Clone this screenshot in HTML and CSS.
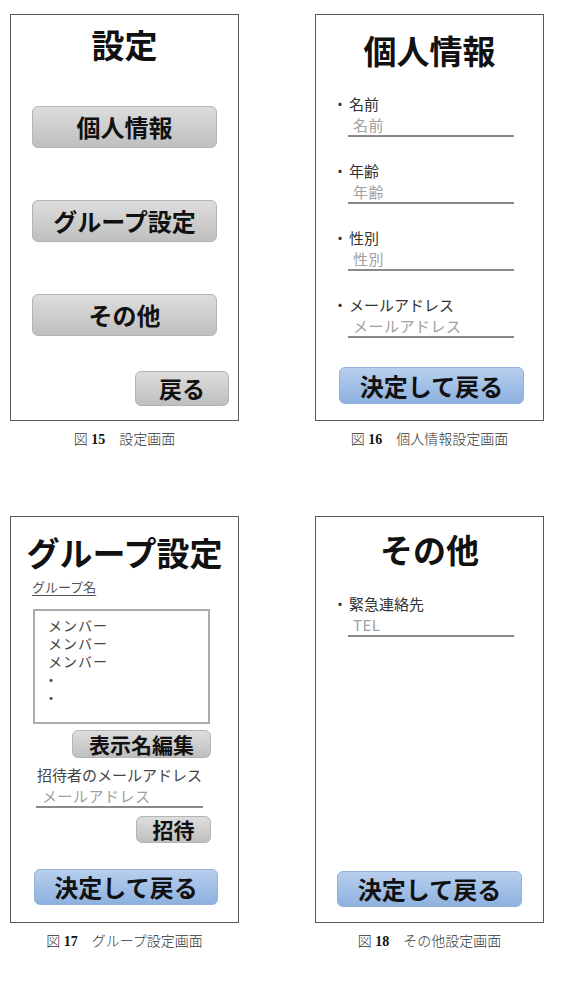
FILE: index.html
```html
<!DOCTYPE html>
<html lang="ja">
<head>
    <meta charset="UTF-8">
    <meta name="viewport" content="width=device-width, initial-scale=1.0">
    <title>設定画面</title>
    <link rel="stylesheet" href="styles.css">
</head>
<body>
    <div class="sheet">
        <!-- 設定 -->
        <div class="figure">
            <div class="screen settings">
                <div class="screen-title">設定</div>
                <button class="btn btn-gray menu-btn first">個人情報</button>
                <button class="btn btn-gray menu-btn">グループ設定</button>
                <button class="btn btn-gray menu-btn">その他</button>
                <button class="btn btn-gray back-btn">戻る</button>
            </div>
            <div class="caption">図 <b>15</b>　設定画面</div>
        </div>

        <!-- 個人情報 -->
        <div class="figure">
            <div class="screen profile">
                <div class="screen-title">個人情報</div>
                <div class="field first">
                    <div class="field-label"><span class="bullet">・</span>名前</div>
                    <div class="field-input">名前</div>
                </div>
                <div class="field">
                    <div class="field-label"><span class="bullet">・</span>年齢</div>
                    <div class="field-input">年齢</div>
                </div>
                <div class="field">
                    <div class="field-label"><span class="bullet">・</span>性別</div>
                    <div class="field-input">性別</div>
                </div>
                <div class="field">
                    <div class="field-label"><span class="bullet">・</span>メールアドレス</div>
                    <div class="field-input">メールアドレス</div>
                </div>
                <button class="btn btn-blue submit-btn">決定して戻る</button>
            </div>
            <div class="caption">図 <b>16</b>　個人情報設定画面</div>
        </div>

        <!-- グループ設定 -->
        <div class="figure">
            <div class="screen group">
                <div class="screen-title">グループ設定</div>
                <div class="group-name">グループ名</div>
                <div class="member-list">
                    <div>メンバー</div>
                    <div>メンバー</div>
                    <div>メンバー</div>
                    <div class="more">・</div>
                    <div class="more">・</div>
                </div>
                <button class="btn btn-gray rename-btn">表示名編集</button>
                <div class="invite-label">招待者のメールアドレス</div>
                <div class="field-input invite-input">メールアドレス</div>
                <button class="btn btn-gray invite-btn">招待</button>
                <button class="btn btn-blue submit-btn">決定して戻る</button>
            </div>
            <div class="caption">図 <b>17</b>　グループ設定画面</div>
        </div>

        <!-- その他 -->
        <div class="figure">
            <div class="screen other">
                <div class="screen-title">その他</div>
                <div class="field first">
                    <div class="field-label"><span class="bullet">・</span>緊急連絡先</div>
                    <div class="field-input">TEL</div>
                </div>
                <button class="btn btn-blue submit-btn">決定して戻る</button>
            </div>
            <div class="caption">図 <b>18</b>　その他設定画面</div>
        </div>
    </div>
</body>
</html>
```

FILE: styles.css
```css
body {
    margin: 0;
    background-color: #FFFFFF;
    font-family: 'Noto Sans CJK JP', sans-serif;
    color: #111;
}
.sheet {
    display: grid;
    grid-template-columns: 229px 229px;
    column-gap: 76px;
    row-gap: 68px;
    padding: 14px 0 0 10px;
}
.screen {
    box-sizing: border-box;
    width: 229px;
    height: 407px;
    border: 1px solid #5a5a5a;
    display: flex;
    flex-direction: column;
    align-items: flex-start;
}
.screen-title {
    align-self: stretch;
    text-align: center;
    font-size: 33px;
    font-weight: bold;
    line-height: 40px;
}
.caption {
    margin-top: 11px;
    text-align: center;
    font-family: 'Liberation Serif', 'Noto Sans CJK JP', serif;
    font-size: 14px;
    font-weight: 300;
    line-height: 16px;
    color: #333;
}
.caption b {
    font-weight: bold;
    color: #111;
}

/* ボタン */
.btn {
    box-sizing: border-box;
    display: flex;
    align-items: center;
    justify-content: center;
    padding: 0;
    font-family: 'Noto Sans CJK JP', sans-serif;
    font-weight: bold;
    line-height: 1;
    color: #111;
    border-radius: 6px;
    cursor: pointer;
}
.btn-gray {
    background: linear-gradient(to bottom, #dddddd, #bfbfbf);
    border: 1px solid #b4b4b4;
}
.btn-blue {
    background: linear-gradient(to bottom, #b8cfee, #8db1df);
    border: 1px solid #93b2da;
}
.submit-btn {
    margin-top: auto;
    width: 185px;
    height: 37px;
    font-size: 24px;
}

/* 設定 */
.settings .screen-title {
    margin-top: 9px;
}
.menu-btn {
    margin: 52px 0 0 21px;
    width: 185px;
    height: 42px;
    font-size: 24px;
}
.menu-btn.first {
    margin-top: 42px;
}
.back-btn {
    align-self: flex-end;
    margin: 35px 9px 0 0;
    width: 94px;
    height: 35px;
    font-size: 23px;
}

/* 入力欄 */
.field {
    margin-top: 24px;
}
.field-label {
    display: flex;
    font-size: 15px;
    line-height: 20px;
    color: #333;
    margin-left: 15px;
}
.bullet {
    width: 18px;
    text-align: center;
}
.field-input {
    box-sizing: content-box;
    margin-left: 32px;
    width: 161px;
    padding: 2px 0 2px 5px;
    font-size: 15px;
    line-height: 17px;
    color: #a0a0a0;
    letter-spacing: 0.5px;
    border-bottom: 2px solid #8a8a8a;
}

/* 個人情報 */
.profile .screen-title {
    margin-top: 15px;
}
.profile .submit-btn {
    margin-left: 23px;
    margin-bottom: 16px;
}

/* グループ設定 */
.group .screen-title {
    margin-top: 15px;
}
.group-name {
    margin: 7px 0 0 21px;
    font-size: 13px;
    line-height: 16px;
    color: #555;
    text-decoration: underline;
    text-underline-offset: 3px;
}
.member-list {
    box-sizing: border-box;
    margin: 14px 0 0 22px;
    width: 177px;
    height: 115px;
    padding: 5px 0 0 13px;
    border: 2px solid #ababab;
    font-size: 14px;
    line-height: 18px;
    color: #444;
    letter-spacing: 1px;
}
.member-list .more {
    text-indent: -4px;
}
.rename-btn {
    align-self: flex-end;
    margin: 6px 27px 0 0;
    width: 139px;
    height: 28px;
    font-size: 21px;
}
.invite-label {
    margin: 7px 0 0 26px;
    font-size: 15px;
    line-height: 20px;
    color: #444;
}
.invite-input {
    margin-left: 25px;
    width: 161px;
    padding-left: 6px;
}
.invite-btn {
    align-self: flex-end;
    margin: 8px 27px 0 0;
    width: 75px;
    height: 27px;
    font-size: 21px;
}
.group .submit-btn {
    margin-left: 23px;
    width: 184px;
    height: 36px;
    margin-bottom: 17px;
}

/* その他 */
.other .screen-title {
    margin-top: 12px;
}
.other .field {
    margin-top: 25px;
}
.other .submit-btn {
    margin-left: 21px;
    height: 36px;
    margin-bottom: 15px;
}
```
